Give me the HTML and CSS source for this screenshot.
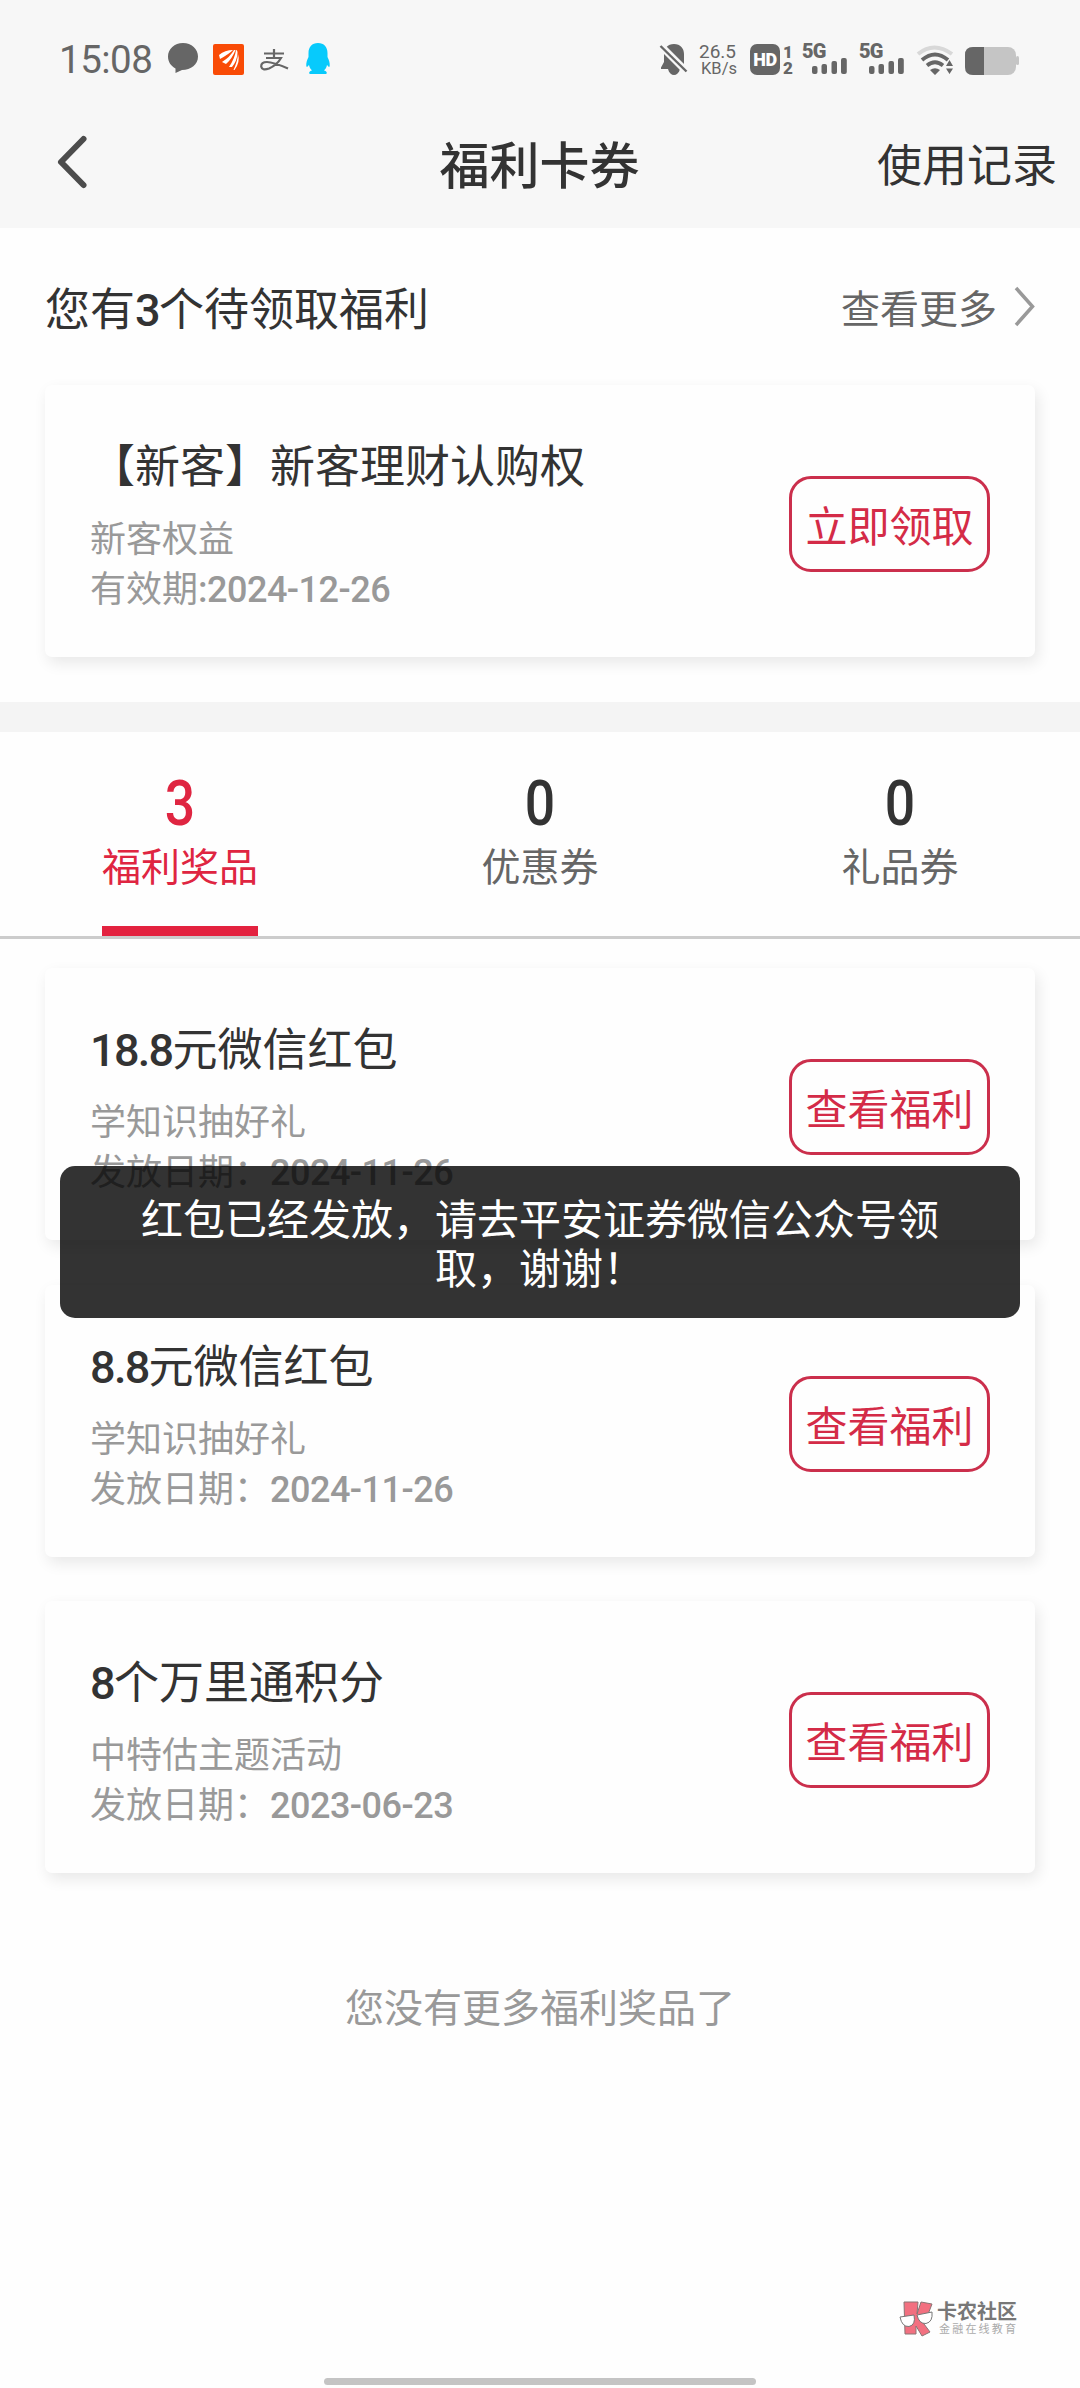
FILE: index.html
```html
<!DOCTYPE html>
<html lang="zh-CN">
<head>
<meta charset="utf-8">
<title>福利卡券</title>
<link rel="stylesheet" href="styles.css">
</head>
<body>
<div class="screen">
  <header class="header">
    <div class="status">
      <div class="status-left">
        <span class="clock">15:08</span>
        <svg class="i-chat" width="30" height="30" viewBox="0 0 30 30"><path fill="#666" d="M15 0C6.500 0 0 6 0 13.500C0 19 3 23 7.500 25.500V30L14 27C23 27 30 21.500 30 13.500C30 6 23.500 0 15 0Z"/></svg>
        <svg class="i-app" width="31" height="31" viewBox="0 0 31 31"><rect width="31" height="31" rx="2" fill="#f94b06"/><path fill="#fff" d="M6 11Q12 6 20 6Q16 10 7 15ZM9 18Q17 13 21 6L22.500 6Q19 15 13 20ZM16 23Q22 14 23 6Q24.500 6 24.500 9Q24 17 19 23ZM20.500 26Q24.500 17 25 10Q27.500 18 21.500 26Z"/></svg>
        <svg class="i-pay" width="28" height="22" viewBox="0 0 28 22" fill="none" stroke="#666" stroke-width="2.200"><path d="M4 4.500H24M14 0V9M6 9H21Q17 16 9 19.500Q2 22 1.200 17.500Q1 13 7 13Q13 13 28 19.500"/></svg>
        <svg class="i-qq" width="24" height="31" viewBox="0 0 24 31"><path fill="#07cafc" d="M12 0C6 0 2.500 4 2.500 10V14C1 17 0 20 .3 23C.6 25 2 23 3 22C3.500 24.500 4.500 26 6 27.500C3 28 2.500 30.500 4 31H20C21.500 30.500 21 28 18 27.500C19.500 26 20.500 24.500 21 22C22 23 23.400 25 23.700 23C24 20 23 17 21.500 14V10C21.500 4 18 0 12 0Z"/></svg>
      </div>
      <div class="status-right">
        <svg width="28" height="31" viewBox="0 0 28 31"><path fill="#666" d="M14 0C7.500 0 4 4.500 4 10V18L1 23.500V25H8C9 29 11.500 31 14 31C16.500 31 19 29 20 25H24V10C24 4.500 20.500 0 14 0Z"/><path d="M-1 0L27 28" stroke="#f7f7f7" stroke-width="7"/><path d="M.5 2L26.500 27.500" stroke="#666" stroke-width="2.400"/></svg>
        <div class="speed"><span>26.5</span><span class="unit">KB/s</span></div>
        <div class="hd"><span class="hd-box">HD</span><span class="sims"><b>1</b><b>2</b></span></div>
        <div class="signal"><b>5G</b><svg width="35" height="16" viewBox="0 0 35 16" fill="#666"><rect y="8" width="5.500" height="8" rx="2"/><rect x="9.500" y="6" width="5.500" height="10" rx="2"/><rect x="19.500" y="3" width="5.500" height="13" rx="2"/><rect x="29" width="5.800" height="16" rx="2"/></svg></div>
        <div class="signal second"><b>5G</b><svg width="35" height="16" viewBox="0 0 35 16" fill="#666"><rect y="8" width="5.500" height="8" rx="2"/><rect x="9.500" y="6" width="5.500" height="10" rx="2"/><rect x="19.500" y="3" width="5.500" height="13" rx="2"/><rect x="29" width="5.800" height="16" rx="2"/></svg></div>
        <svg class="i-wifi" width="36" height="30" viewBox="0 0 36 30" fill="none"><path d="M1 9Q17 -4 35 9" stroke="#d8d8d8" stroke-width="4"/><path d="M5 15Q18 4 31 15M10 20.500Q18 14 26 20.500" stroke="#666" stroke-width="3.800"/><path fill="#666" d="M13 25Q18 21.500 23 25L18 30ZM32.500 15L36 21H29ZM29 23.500H36L32.500 29Z"/></svg>
        <svg class="i-bat" width="54" height="28" viewBox="0 0 54 28"><rect width="51" height="28" rx="8" fill="#c5c5c5"/><rect x="51" y="9" width="3" height="9" rx="1.500" fill="#c5c5c5"/><path fill="#666" d="M8 0H19V28H8Q0 28 0 20V8Q0 0 8 0Z"/></svg>
      </div>
    </div>
    <nav class="nav">
      <svg class="back" width="32" height="56" viewBox="0 0 32 56"><path d="M28.500 5L6 28L28.500 51" fill="none" stroke="#4c4c4c" stroke-width="6" stroke-linecap="round" stroke-linejoin="round"/></svg>
      <h1>福利卡券</h1>
      <a class="history">使用记录</a>
    </nav>
  </header>

  <section class="pending">
    <div class="pending-head">
      <h2>您有<span class="num">3</span>个待领取福利</h2>
      <a class="more">查看更多<svg width="20" height="40" viewBox="0 0 20 40"><path d="M1 2L17.500 20.500L1 39" fill="none" stroke="#999" stroke-width="3.500"/></svg></a>
    </div>
    <article class="card">
      <div class="info">
        <h3>【新客】新客理财认购权</h3>
        <p>新客权益</p>
        <p>有效期<span class="num">:2024-12-26</span></p>
      </div>
      <button class="action">立即领取</button>
    </article>
  </section>

  <div class="tabs">
    <div class="tab active"><span class="count">3</span><span class="label">福利奖品</span></div>
    <div class="tab"><span class="count">0</span><span class="label">优惠券</span></div>
    <div class="tab"><span class="count">0</span><span class="label">礼品券</span></div>
  </div>

  <section class="prizes">
    <article class="card">
      <div class="info">
        <h3><span class="num">18.8</span>元微信红包</h3>
        <p>学知识抽好礼</p>
        <p>发放日期：<span class="num">2024-11-26</span></p>
      </div>
      <button class="action">查看福利</button>
    </article>
    <article class="card">
      <div class="info">
        <h3><span class="num">8.8</span>元微信红包</h3>
        <p>学知识抽好礼</p>
        <p>发放日期：<span class="num">2024-11-26</span></p>
      </div>
      <button class="action">查看福利</button>
    </article>
    <article class="card">
      <div class="info">
        <h3><span class="num">8</span>个万里通积分</h3>
        <p>中特估主题活动</p>
        <p>发放日期：<span class="num">2023-06-23</span></p>
      </div>
      <button class="action">查看福利</button>
    </article>
  </section>
  <p class="end">您没有更多福利奖品了</p>

  <div class="toast">红包已经发放，请去平安证券微信公众号领取，谢谢！</div>

  <div class="watermark">
    <svg width="35" height="36" viewBox="0 0 35 36"><g fill="#f27080" stroke="#8a7575" stroke-width="1"><path d="M5 1H19L18 13L22 1L33 3L28 16L22 19L31 31L23 35L17 25V33H6Z"/></g><g fill="#fff" stroke="#777" stroke-width="1"><path d="M1 16L15 14Q17 24 10 25.500Q3 26 1 16ZM18 14L33 11Q34 21 27 22.500Q20 23 18 14Z"/></g></svg>
    <div class="wm-text"><b>卡农社区</b><span>金融在线教育</span></div>
  </div>
  <div class="home-bar"></div>
</div>
</body>
</html>
```
FILE: styles.css
```css
* { box-sizing: border-box; margin: 0; padding: 0; }
body { background: #fefefe; }
.screen {
  position: relative;
  width: 1080px;
  height: 2388px;
  overflow: hidden;
  background: #fefefe;
  color: #333;
  font-family: "Noto Sans CJK SC", sans-serif;
}
svg { display: block; flex: none; overflow: visible; }
h1, h2, h3 { font-weight: 400; }
.num { font-family: Roboto, sans-serif; font-weight: 500; line-height: 0; letter-spacing: -1.700px; }

.header { height: 228px; background: #f7f7f7; }
.status { display: flex; justify-content: space-between; height: 96px; padding: 43px 61px 0 59px; color: #666; font-family: Roboto, sans-serif; }
.status-left, .status-right { display: flex; align-items: flex-start; }
.clock { width: 109px; font-size: 38.500px; line-height: 34px; letter-spacing: -.5px; }
.i-app { margin: 1px 0 0 15px; }
.i-pay { margin: 6px 0 0 16px; }
.i-qq { margin-left: 18px; }
.status-right { padding-top: 1px; }
.speed { display: flex; flex-direction: column; width: 38px; margin-left: 11px; font-size: 19px; line-height: 16px; }
.speed .unit { padding-left: 2px; font-size: 16.500px; line-height: 18px; }
.hd { display: flex; margin-left: 13px; }
.hd-box { width: 30px; height: 31px; border-radius: 7px; background: #666; color: #fff; font-size: 18px; font-weight: 900; line-height: 31px; text-align: center; letter-spacing: -.5px; }
.sims { display: flex; flex-direction: column; width: 12px; margin-left: 2px; font-size: 17px; line-height: 16px; text-align: center; font-weight: 900; }
.signal { width: 45px; height: 31px; margin-left: 8px; font-size: 20px; line-height: 15px; }
.signal b { display: block; font-weight: 900; letter-spacing: -.8px; }
.signal svg { margin: -1px 0 0 10px; }
.second { margin-left: 12px; }
.i-wifi { margin: 1px 0 0 13px; }
.i-bat { margin: 3px 0 0 12px; }

.nav { display: grid; grid-template-columns: 1fr auto 1fr; align-items: center; height: 132px; padding: 0 23px 0 55px; }
.nav h1 { margin-left: -33px; font-size: 50px; font-weight: 500; }
.nav .history { justify-self: end; font-size: 45px; }

.pending { height: 474px; padding: 0 45px; }
.pending-head { display: flex; align-items: center; justify-content: space-between; height: 157px; padding-bottom: 1px; }
.pending-head h2 { font-size: 45px; line-height: 63px; }
.more { display: flex; align-items: center; gap: 18px; color: #666; font-size: 39px; line-height: 58px; }

.card {
  display: flex;
  justify-content: space-between;
  align-items: flex-start;
  height: 272px;
  padding: 47px 45px 0;
  border-radius: 7px;
  background: #fefefe;
  box-shadow: 3px 6px 15px rgba(0, 0, 0, .09);
}
.card h3 { margin-bottom: 16px; font-size: 45px; line-height: 63px; }
.card p { color: #999; font-size: 36px; line-height: 50px; }
.card p .num { letter-spacing: -.5px; }
.card .action {
  width: 201px;
  height: 96px;
  margin-top: 44px;
  border: 3px solid #cb2f4c;
  border-radius: 22px;
  background: none;
  color: #d42b47;
  font-family: inherit;
  font-size: 42px;
  line-height: 90px;
  white-space: nowrap;
}

.tabs { display: flex; height: 237px; border-top: 30px solid #f4f4f4; border-bottom: 3px solid #ccc; }
.tab { display: flex; flex: 1; flex-direction: column; align-items: center; color: #666; }
.count { height: 104px; padding-top: 40px; color: #333; font-family: Roboto, sans-serif; font-size: 63px; font-weight: 500; line-height: 63px; transform: scaleX(.85); }
.label { height: 100px; font-size: 39px; line-height: 57px; }
.active .count, .active .label { color: #df2541; }
.active .label { border-bottom: 10px solid #e3223f; }

.prizes { display: flex; flex-direction: column; gap: 44.500px; padding: 29px 45px 0; }
.end { margin-top: 103px; color: #999; font-size: 39px; line-height: 58px; text-align: center; }

.toast {
  position: absolute;
  top: 1166px;
  left: 60px;
  width: 960px;
  height: 152px;
  padding: 26px 75px 0;
  border-radius: 15px;
  background: rgba(0, 0, 0, .8);
  color: #fff;
  font-size: 42px;
  line-height: 49px;
  text-align: center;
}
.watermark { position: absolute; top: 2301px; left: 899px; display: flex; gap: 3px; color: #777; }
.wm-text { display: flex; flex-direction: column; white-space: nowrap; }
.wm-text b { font-size: 20px; line-height: 20px; }
.wm-text span { padding-left: 2px; color: #aaa; font-size: 11px; line-height: 15px; letter-spacing: 2.200px; }
.home-bar { position: absolute; left: 324px; bottom: 3px; width: 432px; height: 7px; border-radius: 4px; background: #c4c4c4; }
```
